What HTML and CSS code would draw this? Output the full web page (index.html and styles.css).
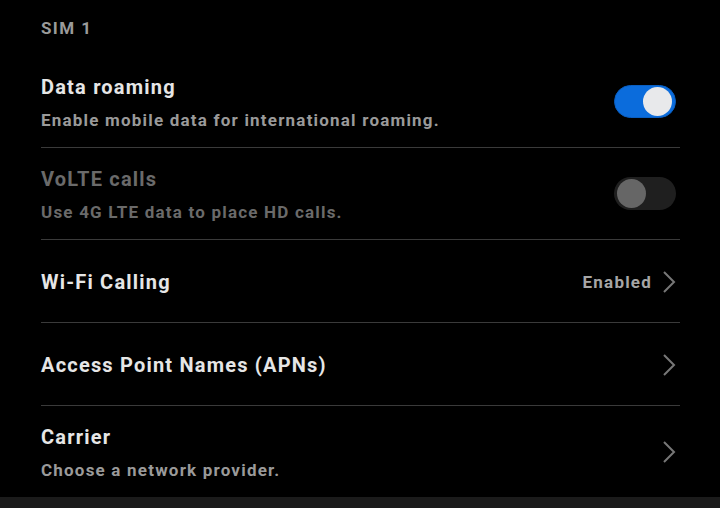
FILE: index.html
```html
<!DOCTYPE html>
<html lang="en">
<head>
    <meta charset="UTF-8">
    <meta name="viewport" content="width=device-width, initial-scale=1.0">
    <title>SIM settings</title>
    <link rel="stylesheet" href="styles.css">
</head>
<body>
    <div class="page">
        <div class="section-title">SIM 1</div>

        <div class="row two-line">
            <div class="text">
                <div class="title">Data roaming</div>
                <div class="subtitle">Enable mobile data for international roaming.</div>
            </div>
            <div class="switch on"><span class="knob"></span></div>
        </div>

        <div class="row two-line disabled">
            <div class="text">
                <div class="title">VoLTE calls</div>
                <div class="subtitle">Use 4G LTE data to place HD calls.</div>
            </div>
            <div class="switch"><span class="knob"></span></div>
        </div>

        <div class="row">
            <div class="text">
                <div class="title">Wi-Fi Calling</div>
            </div>
            <div class="value">Enabled</div>
            <svg class="chevron" viewBox="0 0 14 24" width="14" height="24"><path d="M2 2 L12 12 L2 22" /></svg>
        </div>

        <div class="row">
            <div class="text">
                <div class="title">Access Point Names (APNs)</div>
            </div>
            <svg class="chevron" viewBox="0 0 14 24" width="14" height="24"><path d="M2 2 L12 12 L2 22" /></svg>
        </div>

        <div class="row two-line last">
            <div class="text">
                <div class="title">Carrier</div>
                <div class="subtitle">Choose a network provider.</div>
            </div>
            <svg class="chevron" viewBox="0 0 14 24" width="14" height="24"><path d="M2 2 L12 12 L2 22" /></svg>
        </div>
    </div>
    <div class="bottom-bar"></div>
</body>
</html>
```

FILE: styles.css
```css
body {
    margin: 0;
    padding: 0;
    background: #000;
    font-family: 'Roboto', 'Liberation Sans', sans-serif;
    height: 508px;
    overflow: hidden;
    display: flex;
    flex-direction: column;
}

.page {
    flex: 1;
    padding: 0 40px 0 41px;
}

.section-title {
    height: 56px;
    line-height: 56px;
    color: #9a9a9a;
    font-size: 17px;
    font-weight: bold;
    letter-spacing: 1.4px;
}

.row {
    display: flex;
    align-items: center;
    border-bottom: 1px solid #3a3a3a;
    box-sizing: border-box;
    height: 83px;
    padding-top: 2px;
}

.row.two-line {
    height: 92px;
    padding-top: 5px;
}

.row.last {
    border-bottom: none;
    height: 91px;
}

.text {
    flex: 1;
}

.title {
    color: #e6e6e6;
    font-size: 20px;
    font-weight: bold;
    line-height: 33px;
    letter-spacing: 1.2px;
}

.subtitle {
    color: #9a9a9a;
    font-size: 17px;
    font-weight: bold;
    line-height: 33px;
    letter-spacing: 1.2px;
}

.disabled .title,
.disabled .subtitle {
    color: #6a6a6a;
}

.value {
    color: #a6a6a6;
    font-size: 17px;
    font-weight: bold;
    letter-spacing: 1.2px;
    margin-right: 10px;
}

.chevron {
    margin-right: 4px;
    fill: none;
    stroke: #777;
    stroke-width: 2;
}

.two-line .chevron {
    margin-top: -4px;
}

.switch {
    width: 62px;
    height: 33px;
    border-radius: 17px;
    background: #1f1f1f;
    margin-right: 4px;
    margin-top: -6px;
    box-sizing: border-box;
    padding: 2px 3px;
    display: flex;
    align-items: center;
}

.switch .knob {
    width: 29px;
    height: 29px;
    border-radius: 50%;
    background: #666;
}

.switch.on {
    background: #0b6cdc;
    border: 1px solid #0a5fc2;
    justify-content: flex-end;
}

.switch.on .knob {
    background: #e8e9eb;
}

.bottom-bar {
    height: 11px;
    background: #1b1b1b;
}
```
